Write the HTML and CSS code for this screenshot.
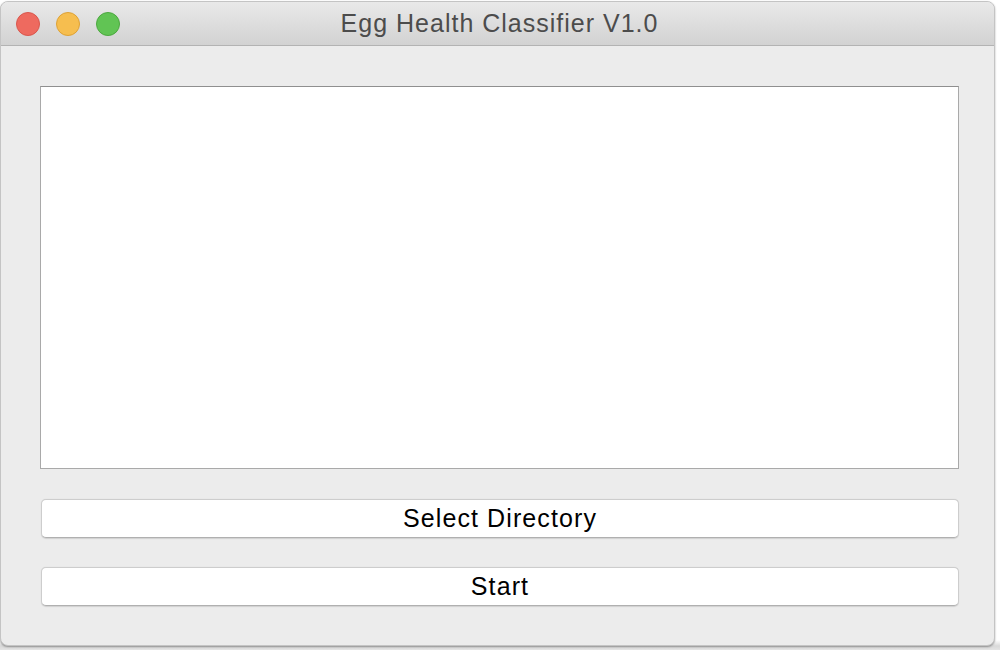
FILE: index.html
```html
<!DOCTYPE html>
<html>
<head>
<meta charset="utf-8">
<link rel="stylesheet" href="styles.css">
</head>
<body>
<div class="desktop">
  <div class="window">
    <div class="titlebar">
      <div class="lights">
        <span class="light red"></span>
        <span class="light yellow"></span>
        <span class="light green"></span>
      </div>
      <div class="title">Egg Health Classifier V1.0</div>
    </div>
    <div class="content">
      <div class="textbox"></div>
      <button class="btn">Select Directory</button>
      <button class="btn">Start</button>
    </div>
  </div>
</div>
</body>
</html>
```

FILE: styles.css
```css
html, body {
  margin: 0;
  padding: 0;
  background: #ffffff;
}
.desktop {
  width: 1000px;
  height: 650px;
  background: linear-gradient(to bottom, #ffffff 0, #ffffff 640px, #d9d9d9 646px, #e4e4e4 650px);
  overflow: hidden;
  padding-top: 1px;
  box-sizing: border-box;
}
.window {
  width: 995px;
  height: 645px;
  background: #ececec;
  border-radius: 8px;
  border: 1px solid #c4c4c4;
  box-sizing: border-box;
  overflow: hidden;
  box-shadow: 0 1px 2px rgba(0,0,0,0.35);
  display: flex;
  flex-direction: column;
  font-family: "Liberation Sans", Arial, sans-serif;
}
.titlebar {
  height: 43px;
  flex: none;
  background: linear-gradient(to bottom, #e9e9e9, #d2d2d2);
  border-bottom: 1px solid #b3b3b3;
  display: flex;
  align-items: center;
  position: relative;
}
.lights {
  display: flex;
  gap: 16px;
  padding-left: 15px;
}
.light {
  width: 24px;
  height: 24px;
  border-radius: 50%;
  box-sizing: border-box;
}
.red { background: #ee6a5f; border: 1px solid #d9574d; }
.yellow { background: #f6be4f; border: 1px solid #dea236; }
.green { background: #61c454; border: 1px solid #4ca83f; }
.title {
  position: absolute;
  left: 0;
  right: 0;
  top: 0;
  bottom: 0;
  display: flex;
  align-items: center;
  justify-content: center;
  font-size: 25px;
  letter-spacing: 1px;
  color: #4c4c4c;
  padding-left: 4px;
}
.content {
  flex: 1;
  display: flex;
  flex-direction: column;
  padding: 40px 35px 0 39px;
}
.textbox {
  height: 383px;
  background: #ffffff;
  border: 1px solid #a9a9a9;
  border-top-color: #8f8f8f;
  box-sizing: border-box;
  margin-bottom: 30px;
}
.btn {
  height: 39px;
  margin: 0 0 29px 1px;
  background: #ffffff;
  border: 1px solid #cdcdcd;
  border-bottom-color: #b0b0b0;
  border-radius: 5px;
  box-shadow: 0 0.5px 1px rgba(0,0,0,0.12);
  font-family: "Liberation Sans", Arial, sans-serif;
  font-size: 25px;
  letter-spacing: 1.1px;
  color: #000000;
  padding: 0;
  line-height: 37px;
}
```
